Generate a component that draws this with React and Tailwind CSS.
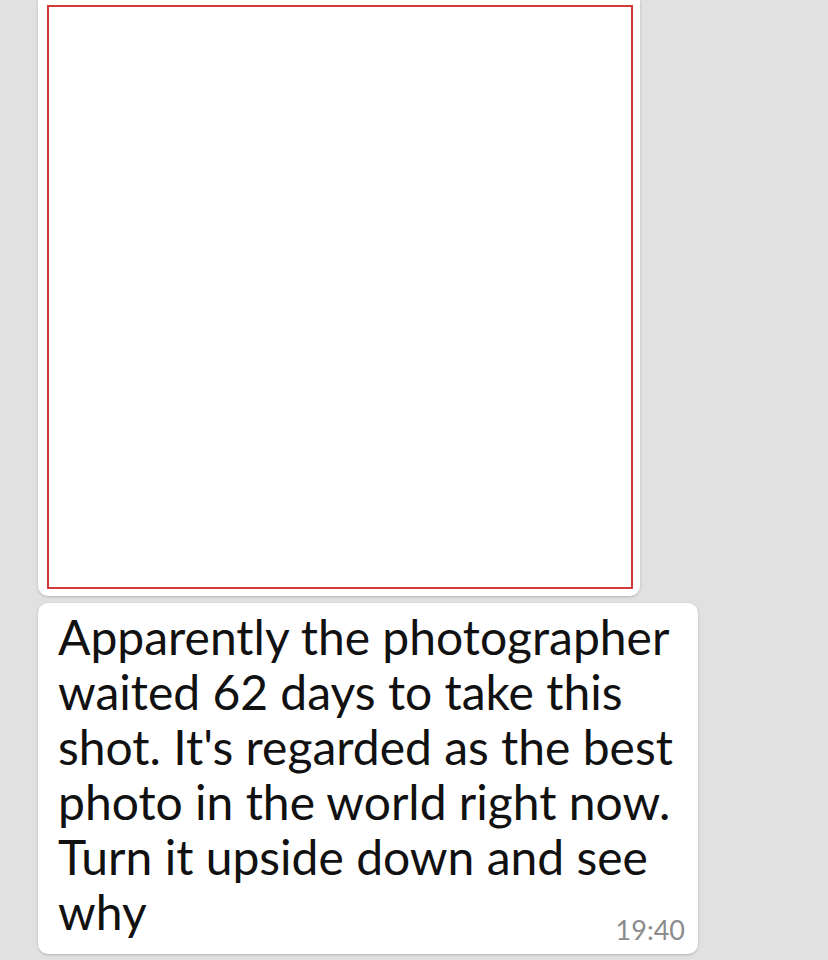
export default function App() {
  return (
    <div className="w-[828px] h-[960px] overflow-hidden bg-[#e1e1e1] pl-[38px]" style={{ fontFamily: 'Lato, sans-serif' }}>
      <div className="w-[602px] h-[596px] bg-white rounded-b-[10px] shadow-[0_1px_3px_rgba(0,0,0,0.2)] pt-[5px] pl-[9px] pr-[7px] pb-[7px]">
        <div className="w-full h-full border-2 border-[#d23b3b] bg-white" />
      </div>
      <div className="mt-[7px] w-[660px] h-[351px] bg-white rounded-[10px] shadow-[0_1px_3px_rgba(0,0,0,0.2)] relative pl-[20px] pt-[6px]">
        <p className="text-[48px] leading-[55px] text-[#111111] whitespace-nowrap">
          Apparently the photographer<br />
          waited 62 days to take this<br />
          shot. It's regarded as the best<br />
          photo in the world right now.<br />
          Turn it upside down and see<br />
          why
        </p>
        <span className="absolute right-[13px] bottom-[8px] text-[27px] leading-[32px] text-[#8c8c8c]">19:40</span>
      </div>
    </div>
  );
}
